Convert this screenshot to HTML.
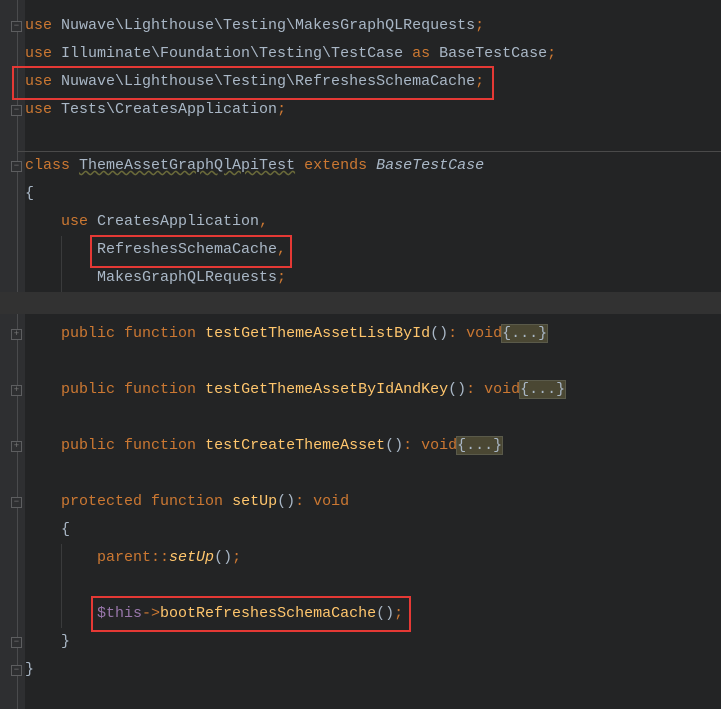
<!DOCTYPE html>
<html><head><meta charset="utf-8"><style>
html,body{margin:0;padding:0;}
body{width:721px;height:709px;background:#232425;position:relative;overflow:hidden;font-family:"Liberation Mono",monospace;font-size:15px;}
.gut{position:absolute;left:0;top:0;width:25px;height:709px;background:#2e2f31;}
.gl{position:absolute;left:17px;top:0;width:1px;height:709px;background:#4a4b4d;}
.cur{position:absolute;left:0;top:292px;width:721px;height:22px;background:#323232;}
.sep{position:absolute;left:18px;top:151px;width:703px;height:1px;background:#4a4a4a;}
.l{position:absolute;left:25px;height:28px;line-height:28px;white-space:pre;color:#a9b7c6;}
.k{color:#cc7832}.f{color:#ffc66d}.t{color:#9876aa}.i{font-style:italic}.p{color:#cc7832}
.fold{background:#4a4733;outline:1px solid #5a5a4a;color:#a9b7c6}
.box{position:absolute;border:2px solid #e53935;}
.fm{position:absolute;left:11px;width:9px;height:9px;border:1px solid #5d5e60;background:#2e2f31;color:#777;font-size:9px;line-height:9px;text-align:center;}
.ig{position:absolute;width:1px;background:#3a3b3c;}
</style></head><body>
<div class="gut"></div><div class="gl"></div>
<div class="cur"></div>
<div class="sep"></div>
<div class="ig" style="left:61px;top:236px;height:56px"></div>
<div class="ig" style="left:61px;top:544px;height:84px"></div>

<div class="fm" style="top:21px">−</div>
<div class="fm" style="top:105px">−</div>
<div class="fm" style="top:161px">−</div>
<div class="fm" style="top:329px">+</div>
<div class="fm" style="top:385px">+</div>
<div class="fm" style="top:441px">+</div>
<div class="fm" style="top:497px">−</div>
<div class="fm" style="top:637px">−</div>
<div class="fm" style="top:665px">−</div>

<div class="l" style="top:12px"><span class="k">use</span> Nuwave\Lighthouse\Testing\MakesGraphQLRequests<span class="k">;</span></div>
<div class="l" style="top:40px"><span class="k">use</span> Illuminate\Foundation\Testing\TestCase <span class="k">as</span> BaseTestCase<span class="k">;</span></div>
<div class="l" style="top:68px"><span class="k">use</span> Nuwave\Lighthouse\Testing\RefreshesSchemaCache<span class="k">;</span></div>
<div class="l" style="top:96px"><span class="k">use</span> Tests\CreatesApplication<span class="k">;</span></div>
<div class="l" style="top:152px"><span class="k">class</span> <span style="text-decoration:underline wavy #6b6b3a">ThemeAssetGraphQlApiTest</span> <span class="k">extends</span> <span class="i">BaseTestCase</span></div>
<div class="l" style="top:180px">{</div>
<div class="l" style="top:208px">    <span class="k">use</span> CreatesApplication<span class="k">,</span></div>
<div class="l" style="top:236px">        RefreshesSchemaCache<span class="k">,</span></div>
<div class="l" style="top:264px">        MakesGraphQLRequests<span class="k">;</span></div>
<div class="l" style="top:320px">    <span class="k">public function</span> <span class="f">testGetThemeAssetListById</span>()<span class="k">:</span> <span class="k">void</span><span class="fold">{...}</span></div>
<div class="l" style="top:376px">    <span class="k">public function</span> <span class="f">testGetThemeAssetByIdAndKey</span>()<span class="k">:</span> <span class="k">void</span><span class="fold">{...}</span></div>
<div class="l" style="top:432px">    <span class="k">public function</span> <span class="f">testCreateThemeAsset</span>()<span class="k">:</span> <span class="k">void</span><span class="fold">{...}</span></div>
<div class="l" style="top:488px">    <span class="k">protected function</span> <span class="f">setUp</span>()<span class="k">:</span> <span class="k">void</span></div>
<div class="l" style="top:516px">    {</div>
<div class="l" style="top:544px">        <span class="k">parent</span><span class="k">::</span><span class="f i">setUp</span>()<span class="k">;</span></div>
<div class="l" style="top:600px">        <span class="t">$this</span><span class="k">-&gt;</span><span class="f">bootRefreshesSchemaCache</span>()<span class="k">;</span></div>
<div class="l" style="top:628px">    }</div>
<div class="l" style="top:656px">}</div>

<div class="box" style="left:12px;top:66px;width:478px;height:30px"></div>
<div class="box" style="left:90px;top:235px;width:198px;height:29px"></div>
<div class="box" style="left:91px;top:596px;width:316px;height:32px"></div>
</body></html>
